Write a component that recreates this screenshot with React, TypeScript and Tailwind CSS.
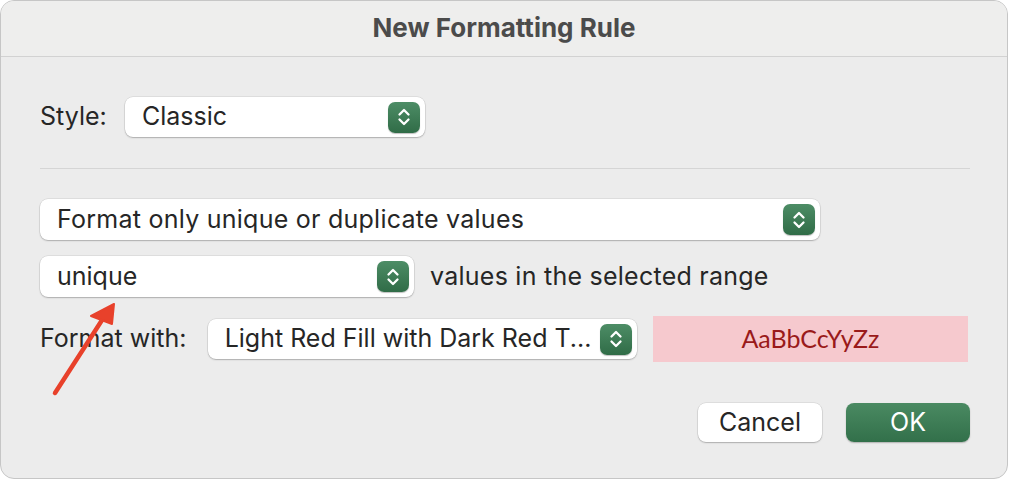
import React from "react";

const FONT = { fontFamily: "Inter, 'Liberation Sans', sans-serif" };

function Stepper() {
  return (
    <span className="flex h-[31px] w-[32px] shrink-0 items-center justify-center rounded-[7px] bg-gradient-to-b from-[#4d8d66] to-[#306c47] shadow-[0_1px_1px_rgba(0,0,0,0.25)]">
      <svg width="14" height="22" viewBox="0 0 14 22" fill="none" stroke="white" strokeWidth="2.3" strokeLinecap="round" strokeLinejoin="round">
        <path d="M2.5 8.5 L7 4 L11.5 8.5" />
        <path d="M2.5 13.5 L7 18 L11.5 13.5" />
      </svg>
    </span>
  );
}

function Select({ value, className }: { value: string; className: string }) {
  return (
    <div
      className={
        "flex items-center justify-between rounded-[8px] bg-white pl-[17px] pr-[5px] text-[25px] text-[#262626] shadow-[0_0_0_0.5px_rgba(0,0,0,0.12),0_1px_1.5px_rgba(0,0,0,0.22)] " +
        className
      }
    >
      <span className="whitespace-nowrap">{value}</span>
      <Stepper />
    </div>
  );
}

export default function App() {
  return (
    <div className="h-[482px] w-[1010px] bg-white" style={FONT}>
      <div className="relative h-[479px] w-[1008px] overflow-hidden rounded-[14px] border border-[#c6c6c6] bg-[#ececec]">
        <div className="flex h-[56px] items-center justify-center border-b border-[#d2d2d2] bg-[#eeeeed] pb-[2px] text-[26px] font-bold text-[#4b4b4b]">
          New Formatting Rule
        </div>

        <div className="px-[39px] pt-[40px] text-[25px] text-[#262626]">
          <div className="flex h-[40px] items-center">
            <span className="w-[85px]">Style:</span>
            <Select value="Classic" className="h-[40px] w-[300px]" />
          </div>

          <div className="mt-[31px] h-px w-[930px] bg-[#d5d5d5]" />

          <Select value="Format only unique or duplicate values" className="mt-[30px] h-[41px] w-[780px] tracking-[0.25px]" />

          <div className="mt-[16px] flex items-center gap-[16px]">
            <Select value="unique" className="h-[41px] w-[374px]" />
            <span className="tracking-[0.25px]">values in the selected range</span>
          </div>

          <div className="mt-[19px] flex h-[46px] items-center">
            <span className="w-[168px] whitespace-nowrap">Format with:</span>
            <Select value="Light Red Fill with Dark Red T..." className="h-[40px] w-[430px]" />
            <div
              className="ml-[16px] flex h-[46px] w-[316px] items-center justify-center bg-[#f6c9ce] text-[25px] text-[#9a1a1a]"
              style={{ fontFamily: "Lato, 'Open Sans', sans-serif" }}
            >
              AaBbCcYyZz
            </div>
          </div>

          <div className="mt-[41px] flex w-[930px] justify-end gap-[24px]">
            <button className="h-[39px] w-[124px] rounded-[8px] bg-white text-[25px] text-[#262626] shadow-[0_0_0_0.5px_rgba(0,0,0,0.12),0_1px_1.5px_rgba(0,0,0,0.22)]">
              Cancel
            </button>
            <button className="h-[39px] w-[124px] rounded-[8px] bg-gradient-to-b from-[#4a8a62] to-[#32704a] text-[25px] text-white shadow-[0_1px_1.5px_rgba(0,0,0,0.25)]">
              OK
            </button>
          </div>
        </div>

        <svg className="pointer-events-none absolute left-0 top-0" width="1008" height="479" viewBox="0 0 1008 479">
          <path d="M54 392 L103 316" stroke="#e8412b" strokeWidth="4.5" strokeLinecap="round" />
          <path d="M113 303 L90 315 L111 323 Z" fill="#e8412b" stroke="#e8412b" strokeWidth="2" strokeLinejoin="round" />
        </svg>
      </div>
    </div>
  );
}
